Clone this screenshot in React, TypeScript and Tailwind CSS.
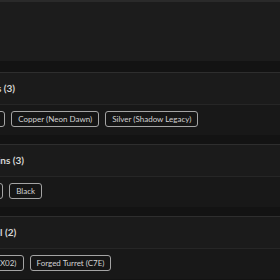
const GROUPS = [
  {
    label: "Variants (3)",
    labelShift: "-ml-[35px]",
    chipShift: "-ml-[61px]",
    chips: ["Bronze (Origin)", "Copper (Neon Dawn)", "Silver (Shadow Legacy)"],
  },
  {
    label: "Skins (3)",
    labelShift: "-ml-[13px]",
    chipShift: "-ml-[66px]",
    chips: ["Red", "White", "Black"],
  },
  {
    label: "Model (2)",
    labelShift: "-ml-[26px]",
    chipShift: "-ml-[53px]",
    chips: ["Ion Blaster (SX02)", "Forged Turret (C7E)"],
  },
] as const;

function Chip({ text }: { text: string }) {
  return (
    <span className="flex h-[16px] shrink-0 items-center rounded-[3px] border border-[#a4a4a4] bg-[#151515] px-[6px] text-[8px] leading-none text-[#d2d2d2]">
      {text}
    </span>
  );
}

export default function App() {
  return (
    <div className="h-[280px] w-[280px] overflow-hidden bg-[#131313] font-['Lato',sans-serif]">
      <div className="h-[61px] border-t-2 border-[#2a2a2a] bg-[#1c1c1c]" />
      <div className="mt-[11px] flex flex-col gap-[9px]">
        {GROUPS.map((g) => (
          <section key={g.label} className="border-t border-[#2e2e2e] bg-[#1b1b1b]">
            <div
              className={`flex h-[31px] items-center whitespace-nowrap text-[10px] font-bold text-[#d6d6d6] ${g.labelShift}`}
            >
              {g.label}
            </div>
            <div className="border-t border-[#262626] bg-[#181818] pt-[6px] pb-[8px]">
              <div className={`flex gap-[6px] whitespace-nowrap ${g.chipShift}`}>
                {g.chips.map((c) => (
                  <Chip key={c} text={c} />
                ))}
              </div>
            </div>
          </section>
        ))}
      </div>
    </div>
  );
}
